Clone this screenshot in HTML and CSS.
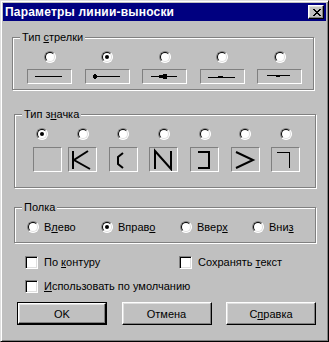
FILE: index.html
```html
<!DOCTYPE html>
<html lang="ru">
<head>
<meta charset="utf-8">
<title>Параметры линии-выноски</title>
<link rel="stylesheet" href="styles.css">
</head>
<body>
<div class="window">
  <div class="titlebar">
    <span class="title">Параметры линии-выноски</span>
    <span class="close">
      <svg width="8" height="7" viewBox="0 0 8 7" shape-rendering="crispEdges"><path d="M0 0h2v1h-2zM6 0h2v1h-2zM1 1h2v1h-2zM5 1h2v1h-2zM2 2h4v1h-4zM3 3h2v1h-2zM2 4h4v1h-4zM1 5h2v1h-2zM5 5h2v1h-2zM0 6h2v1h-2zM6 6h2v1h-2z" fill="#000"/></svg>
    </span>
  </div>
  <div class="client">
    <fieldset class="group g-arrow">
      <legend>Тип <u>с</u>трелки</legend>
      <div class="arrow-grid">
        <div class="opt"><span class="radio"></span><span class="well w-arrow"><svg width="43" height="13" shape-rendering="crispEdges"><rect x="7" y="6" width="27" height="1"/></svg></span></div>
        <div class="opt"><span class="radio on"></span><span class="well w-arrow"><svg width="43" height="13" shape-rendering="crispEdges"><rect x="7" y="6" width="27" height="1"/><rect x="7" y="5" width="4" height="3"/><rect x="8" y="4" width="2" height="5"/></svg></span></div>
        <div class="opt"><span class="radio"></span><span class="well w-arrow"><svg width="43" height="13" shape-rendering="crispEdges"><rect x="8" y="6" width="26" height="1"/><rect x="16" y="5" width="4" height="3"/><rect x="20" y="4" width="4" height="5"/></svg></span></div>
        <div class="opt"><span class="radio"></span><span class="well w-arrow"><svg width="43" height="13" shape-rendering="crispEdges"><rect x="7" y="7" width="27" height="1"/><rect x="17" y="6" width="5" height="1"/></svg></span></div>
        <div class="opt"><span class="radio"></span><span class="well w-arrow"><svg width="43" height="13" shape-rendering="crispEdges"><rect x="9" y="5" width="23" height="1"/><rect x="18" y="6" width="4" height="1"/></svg></span></div>
      </div>
    </fieldset>

    <fieldset class="group g-sign">
      <legend>Тип з<u>н</u>ачка</legend>
      <div class="sign-grid">
        <div class="opt first"><span class="radio on"></span><span class="well w-sign"></span></div>
        <div class="opt"><span class="radio"></span><span class="well w-sign"><svg width="27" height="23"><path d="M4 3V21M19 3L5 12L21 21" stroke="#000" stroke-width="2" fill="none"/></svg></span></div>
        <div class="opt"><span class="radio"></span><span class="well w-sign"><svg width="27" height="23"><path d="M13 5L8 9V16L13 20" stroke="#000" stroke-width="2" fill="none"/></svg></span></div>
        <div class="opt"><span class="radio"></span><span class="well w-sign"><svg width="27" height="23"><path d="M5 21V3L21 21V3" stroke="#000" stroke-width="2" fill="none"/></svg></span></div>
        <div class="opt"><span class="radio"></span><span class="well w-sign"><svg width="27" height="23" shape-rendering="crispEdges"><path d="M7 4H18V20H7" stroke="#000" stroke-width="2" fill="none"/></svg></span></div>
        <div class="opt"><span class="radio"></span><span class="well w-sign"><svg width="27" height="23"><path d="M4 4L21 12L4 20" stroke="#000" stroke-width="2" fill="none"/></svg></span></div>
        <div class="opt"><span class="radio"></span><span class="well w-sign"><svg width="27" height="23" shape-rendering="crispEdges"><rect x="5" y="4" width="13" height="1"/><rect x="17" y="4" width="1" height="16"/></svg></span></div>
      </div>
    </fieldset>

    <fieldset class="group g-shelf">
      <legend>Полка</legend>
      <div class="shelf-row">
        <label class="choice"><span class="radio"></span><span>В<u>л</u>ево</span></label>
        <label class="choice"><span class="radio on"></span><span>Вправ<u>о</u></span></label>
        <label class="choice"><span class="radio"></span><span>Ввер<u>х</u></span></label>
        <label class="choice"><span class="radio"></span><span>Вни<u>з</u></span></label>
      </div>
    </fieldset>

    <div class="checks">
      <div class="check-row">
        <label class="choice c1"><span class="checkbox"></span><span>По <u>к</u>онтуру</span></label>
        <label class="choice"><span class="checkbox"></span><span>Сохранять <u>т</u>екст</span></label>
      </div>
      <div class="check-row">
        <label class="choice"><span class="checkbox"></span><span><u>И</u>спользовать по умолчанию</span></label>
      </div>
    </div>

    <div class="buttons">
      <div class="btn default"><span class="btn-face">OK</span></div>
      <div class="btn"><span class="btn-face">Отмена</span></div>
      <div class="btn"><span class="btn-face">С<u>п</u>равка</span></div>
    </div>
  </div>
</div>
</body>
</html>
```
FILE: styles.css
```css
html, body {
  margin: 0;
  padding: 0;
  background: #c0c0c0;
}
body {
  font-family: "Liberation Sans", Arial, sans-serif;
  font-size: 11px;
  color: #000;
}
.window {
  width: 329px;
  height: 342px;
  box-sizing: border-box;
  background: #c0c0c0;
  border: 1px solid;
  border-color: #dfdfdf #000 #000 #dfdfdf;
  box-shadow: inset 1px 1px 0 #fff, inset -1px -1px 0 #808080;
  padding: 2px;
}
.titlebar {
  height: 18px;
  background: #000080;
  display: flex;
  align-items: center;
  justify-content: space-between;
  padding-left: 2px;
}
.title {
  color: #fff;
  font-weight: bold;
  font-size: 12px;
  line-height: 18px;
  letter-spacing: 0.2px;
}
.close {
  width: 16px;
  height: 14px;
  box-sizing: border-box;
  margin-right: 2px;
  background: #c0c0c0;
  border: 1px solid;
  border-color: #fff #000 #000 #fff;
  box-shadow: inset -1px -1px 0 #808080, inset 1px 1px 0 #dfdfdf;
  display: flex;
  align-items: flex-start;
  justify-content: flex-start;
  padding: 3px 0 0 4px;
}
.close svg { display: block; }

.client {
  padding-top: 10px;
}
.group {
  margin: 0;
  padding: 0;
  min-width: 0;
  width: 302px;
  box-sizing: border-box;
  border: 1px solid #808080;
  box-shadow: inset 1px 1px 0 #fff, 1px 1px 0 #fff;
}
.group legend {
  margin-left: 7px;
  padding: 0 2px;
  line-height: 13px;
  background: #c0c0c0;
}
.g-arrow { margin-left: 9px; }
.g-sign { margin-left: 11px; margin-top: 18px; }
.g-shelf { margin-left: 11px; margin-top: 13px; }

.opt {
  display: flex;
  flex-direction: column;
  align-items: center;
}
.arrow-grid {
  display: grid;
  grid-template-columns: repeat(5, 45px);
  column-gap: 12.5px;
  padding: 7px 0 5px 14px;
}
.arrow-grid .opt { gap: 6px; }
.sign-grid {
  display: grid;
  grid-template-columns: repeat(7, 29px);
  column-gap: 11.66px;
  padding: 7px 0 15px 12.5px;
}
.sign-grid .opt { gap: 7px; }
.sign-grid .opt.first { align-items: flex-start; }
.sign-grid .opt.first .radio { margin-left: 8px; }
.sign-grid .opt.first .well { margin-left: 5.5px; }

.well {
  display: block;
  box-sizing: border-box;
  border: 1px solid;
  border-color: #808080 #fff #fff #808080;
}
.well svg { display: block; }
.w-arrow { width: 45px; height: 15px; }
.w-sign { width: 29px; height: 25px; }

.radio {
  display: block;
  flex: none;
  width: 12px;
  height: 12px;
  box-sizing: border-box;
  border-radius: 50%;
  border: 1px solid;
  border-color: #808080 #fff #fff #808080;
  background: #fff;
  position: relative;
}
.radio::before {
  content: "";
  position: absolute;
  inset: 0;
  border-radius: 50%;
  border: 1px solid;
  border-color: #000 #dfdfdf #dfdfdf #000;
}
.radio.on::after {
  content: "";
  position: absolute;
  left: 3px;
  top: 3px;
  width: 4px;
  height: 4px;
  border-radius: 50%;
  background: #000;
}

.shelf-row {
  display: grid;
  grid-template-columns: 74px 79px 72px auto;
  padding: 7px 0 9px 12px;
}
.choice {
  display: flex;
  align-items: center;
  gap: 6px;
  line-height: 13px;
}
.shelf-row .choice { gap: 5px; height: 12px; }

.checks {
  margin-top: 13px;
  padding-left: 22px;
  display: flex;
  flex-direction: column;
  gap: 11px;
}
.check-row {
  display: flex;
  height: 13px;
}
.check-row .c1 { width: 154px; }
.checkbox {
  display: block;
  flex: none;
  width: 13px;
  height: 13px;
  box-sizing: border-box;
  border: 1px solid;
  border-color: #808080 #fff #fff #808080;
  box-shadow: inset 1px 1px 0 #000, inset -1px -1px 0 #dfdfdf;
  background: #fff;
}

.buttons {
  display: flex;
  gap: 14.5px;
  margin-top: 9px;
  padding-left: 14px;
}
.btn {
  width: 90px;
  height: 23px;
  box-sizing: border-box;
  display: flex;
}
.btn-face {
  flex: 1;
  display: flex;
  align-items: center;
  justify-content: center;
  border: 1px solid;
  border-color: #fff #000 #000 #fff;
  box-shadow: inset -1px -1px 0 #808080, inset 1px 1px 0 #dfdfdf;
  font-size: 11px;
}
.btn.default {
  border: 1px solid #000;
}
```
